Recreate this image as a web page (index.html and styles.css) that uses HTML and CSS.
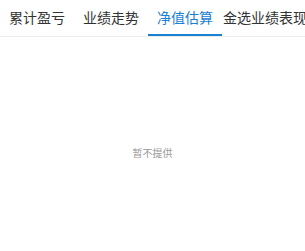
FILE: index.html
```html
<!DOCTYPE html>
<html lang="zh-CN">
<head>
    <meta charset="UTF-8">
    <meta name="viewport" content="width=device-width, initial-scale=1.0">
    <title>净值估算</title>
    <link rel="stylesheet" href="styles.css">
</head>
<body>
    <div class="tabs">
        <div class="tab">累计盈亏</div>
        <div class="tab">业绩走势</div>
        <div class="tab active">净值估算</div>
        <div class="tab tab-wide">金选业绩表现</div>
    </div>
    <div class="empty">暂不提供</div>
</body>
</html>
```

FILE: styles.css
```css
body {
    margin: 0;
    background-color: #fff;
    font-family: "Noto Sans CJK SC", "Noto Sans", sans-serif;
    overflow: hidden;
}
.tabs {
    display: flex;
    height: 36px;
    border-bottom: 1px solid #ececec;
    white-space: nowrap;
    overflow: hidden;
}
.tab {
    flex: 0 0 74px;
    box-sizing: border-box;
    text-align: center;
    font-size: 14px;
    line-height: 34px;
    color: #333;
}
.tab.active {
    color: #1a80d2;
    border-bottom: 2px solid #1a80d2;
}
.tab-wide {
    flex: 0 0 auto;
    text-align: left;
    padding-left: 1px;
}
.empty {
    padding-top: 108px;
    text-align: center;
    font-size: 10px;
    color: #999;
}
```
